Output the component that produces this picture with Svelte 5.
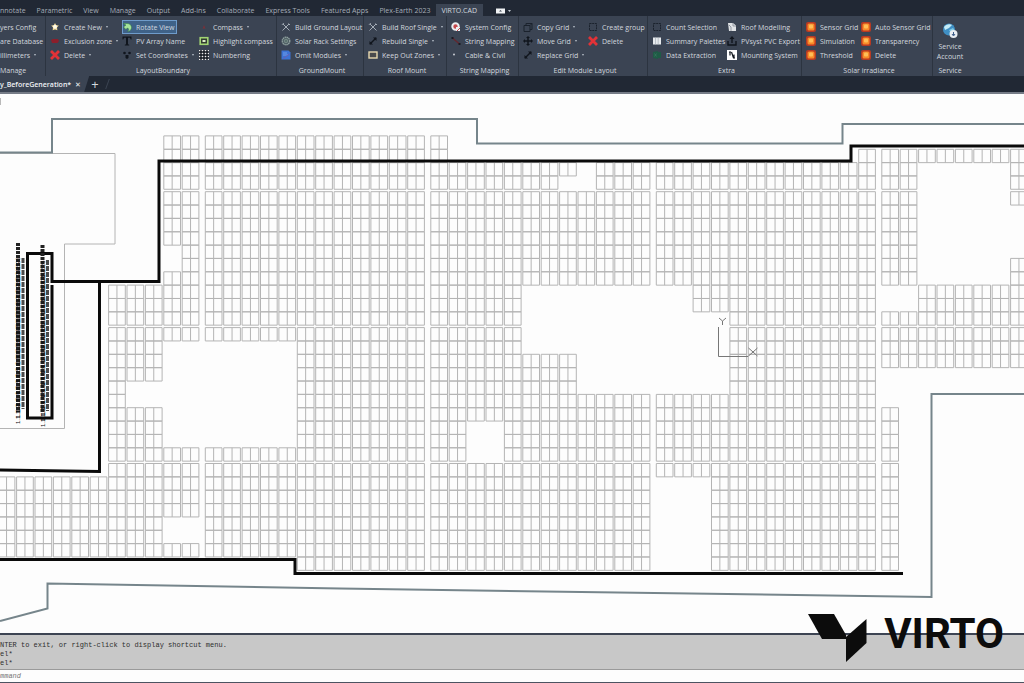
<script lang="ts">
  type Tool = { icon: string; label: string; menu?: boolean; active?: boolean };
  type Panel = { title: string; cols: string; tools: Tool[][] };

  const menuTabs = [
    'nnotate', 'Parametric', 'View', 'Manage', 'Output', 'Add-ins', 'Collaborate',
    'Express Tools', 'Featured Apps', 'Plex-Earth 2023', 'VIRTO.CAD',
  ];

  const panels: Panel[] = [
    {
      title: 'LayoutBoundary',
      cols: '72fr 77fr 77fr',
      tools: [
        [
          { icon: 'star', label: 'Create New', menu: true },
          { icon: 'zone', label: 'Exclusion zone', menu: true },
          { icon: 'cross', label: 'Delete', menu: true },
        ],
        [
          { icon: 'rotate', label: 'Rotate View', active: true },
          { icon: 'text', label: 'PV Array Name' },
          { icon: 'points', label: 'Set Coordinates', menu: true },
        ],
        [
          { icon: 'compass', label: 'Compass', menu: true },
          { icon: 'highlight', label: 'Highlight compass' },
          { icon: 'hash', label: 'Numbering' },
        ],
      ],
    },
    {
      title: 'GroundMount',
      cols: '1fr',
      tools: [[
        { icon: 'tools', label: 'Build Ground Layout' },
        { icon: 'gear', label: 'Solar Rack Settings' },
        { icon: 'omit', label: 'Omit Modules', menu: true },
      ]],
    },
    {
      title: 'Roof Mount',
      cols: '1fr',
      tools: [[
        { icon: 'tools', label: 'Build Roof Single', menu: true },
        { icon: 'resize', label: 'Rebuild Single', menu: true },
        { icon: 'keepout', label: 'Keep Out Zones', menu: true },
      ]],
    },
    {
      title: 'String Mapping',
      cols: '1fr',
      tools: [[
        { icon: 'config', label: 'System Config' },
        { icon: 'string', label: 'String Mapping' },
        { icon: 'dot', label: 'Cable & Civil' },
      ]],
    },
    {
      title: 'Edit Module Layout',
      cols: '65fr 59fr',
      tools: [
        [
          { icon: 'copy', label: 'Copy Grid', menu: true },
          { icon: 'move', label: 'Move Grid', menu: true },
          { icon: 'resize', label: 'Replace Grid', menu: true },
        ],
        [
          { icon: 'select', label: 'Create group' },
          { icon: 'cross', label: 'Delete' },
        ],
      ],
    },
    {
      title: 'Extra',
      cols: '75fr 74fr',
      tools: [
        [
          { icon: 'select', label: 'Count Selection' },
          { icon: 'palette', label: 'Summary Palettes' },
          { icon: 'extract', label: 'Data Extraction' },
        ],
        [
          { icon: 'roof', label: 'Roof Modelling' },
          { icon: 'export', label: 'PVsyst PVC Export' },
          { icon: 'mount', label: 'Mounting System' },
        ],
      ],
    },
    {
      title: 'Solar irradiance',
      cols: '55fr 71fr',
      tools: [
        [
          { icon: 'sun', label: 'Sensor Grid' },
          { icon: 'sun', label: 'Simulation' },
          { icon: 'sun', label: 'Threshold' },
        ],
        [
          { icon: 'sun', label: 'Auto Sensor Grid' },
          { icon: 'sun', label: 'Transparency' },
          { icon: 'sun', label: 'Delete' },
        ],
      ],
    },
  ];

  // Module tables: [first column, last column, [first row, last row]...]
  const tables: [number, number, [number, number][]][] = [
    [0, 6, [[25, 30]]],
    [7, 7, [[11, 30]]],
    [8, 9, [[11, 17], [20, 30]]],
    [10, 10, [[0, 7], [10, 14], [23, 27], [30, 30]]],
    [11, 11, [[0, 14], [23, 27], [30, 30]]],
    [12, 16, [[0, 14], [23, 30]]],
    [17, 24, [[0, 31]]],
    [25, 25, [[2, 31]]],
    [26, 27, [[2, 20], [24, 31]]],
    [28, 28, [[2, 31]]],
    [29, 30, [[2, 10], [16, 31]]],
    [31, 31, [[2, 2], [4, 10], [16, 31]]],
    [32, 32, [[4, 10], [19, 31]]],
    [33, 35, [[2, 10], [19, 31]]],
    [36, 37, [[2, 10], [19, 24]]],
    [38, 38, [[2, 12], [19, 24]]],
    [39, 39, [[2, 12], [19, 31]]],
    [40, 46, [[2, 31]]],
    [47, 47, [[1, 31]]],
    [48, 48, [[1, 10], [13, 16], [20, 31]]],
    [49, 49, [[1, 10], [13, 16]]],
    [50, 54, [[1, 1], [11, 16]]],
    [55, 55, [[1, 4], [9, 16]]],
  ];

  const CELL_W = 8.35;
  const CELL_H = 13.35;

  // twelve tables per block, a walkway between blocks
  function colX(c: number): number {
    return -20.2 + Math.floor(c / 12) * 225.5 + (c % 12) * 18.4;
  }

  // ten rows per section, shifted so that the first section has four
  function rowY(r: number): number {
    const n = r + 6;
    return 55.8 + Math.floor(n / 10) * 135.9 + (n % 10) * CELL_H;
  }

  function modulePath(): string {
    let d = '';
    for (const [from, to, runs] of tables) {
      for (let c = from; c <= to; c++) {
        for (const [a, b] of runs) {
          for (let r = a; r <= b; r++) {
            const x = colX(c).toFixed(1);
            const y = rowY(r).toFixed(1);
            d += `M${x} ${y}h${CELL_W * 2}v${CELL_H}h${-CELL_W * 2}zm${CELL_W} 0v${CELL_H}`;
          }
        }
      }
    }
    return d;
  }

  const modules = modulePath();

  // string labels, stacked so tightly that they overlap
  const labelRows = Array.from({ length: 26 }, (_, i) => i);

  let command = $state('');
</script>

{#snippet icon(name: string)}
  <svg class="icon" viewBox="0 0 10 10" aria-hidden="true">
    {#if name === 'star'}
      <path d="M5 1l1.200 2.200 2.600.4-1.800 2 .4 2.600L5 7.400 2.600 8.200l.4-2.600-1.800-2 2.600-.4z" fill="#f0d795" />
      <circle cx="5" cy="4.800" r="2" fill="#fffbe8" />
    {:else if name === 'zone'}
      <path d="M1 4l2-1h5l1 2-1.500 2H2z" fill="#8b1f2b" />
    {:else if name === 'cross'}
      <path d="M1 1l8 8M9 1l-8 8" stroke="#e23237" stroke-width="2.800" />
    {:else if name === 'rotate'}
      <path d="M1 1.500h4c3 0 4.500 1.800 4.500 4S8 9.300 5.500 9.500c1.500-1 1.700-3-.2-3.500L4 7.500 1.500 5 4 3z" fill="#a5e39a" stroke="#2c7a3c" stroke-width=".5" />
    {:else if name === 'text'}
      <path d="M.5 .5h9V3.500h-.8L8 1.800H6v6.400l1.200.5V9.500H2.800v-.8L4 8.200V1.800H2l-.7 1.700H.5z" fill="#10151d" />
    {:else if name === 'points'}
      <circle cx="2.500" cy="3" r="1.300" fill="#10151d" /><circle cx="7.500" cy="3" r="1.300" fill="#10151d" />
      <path d="M3.500 5h3v3l-1.500 1-1.500-1z" fill="#10151d" />
    {:else if name === 'compass'}
      <path d="M5 3l1.500 4L5 6.200 3.500 7z" fill="#7c3138" />
    {:else if name === 'highlight'}
      <rect x="1.200" y="1.700" width="7.600" height="6.600" fill="#333c32" stroke="#a2d473" stroke-width="1.600" />
      <rect x="3.500" y="4" width="3" height="2" fill="#dcecc8" />
    {:else if name === 'hash'}
      <rect width="10" height="10" fill="#f2f2f2" />
      <path d="M2 0v10M5 0v10M8 0v10M0 2h10M0 5h10M0 8h10" stroke="#10151d" stroke-width="1.400" />
    {:else if name === 'tools'}
      <path d="M2 2l6.500 6.500M8 2L1.500 8.500" stroke="#a4acb6" stroke-width="1" />
      <path d="M1 2.800L2.800 1M7.500 1.500l1.500 1.500" stroke="#a4acb6" stroke-width="1" />
    {:else if name === 'gear'}
      <circle cx="5" cy="5" r="3.800" fill="#4c5b62" stroke="#92a4a1" stroke-width="1.300" stroke-dasharray="1.500 .5" />
      <circle cx="5" cy="5" r="1.800" fill="#5c7270" stroke="#8fa39c" stroke-width=".6" />
    {:else if name === 'omit'}
      <path d="M.5 .5h7l2 2v7h-9z" fill="#3c73d6" />
      <path d="M2 3h4M2 5h5" stroke="#7fa7ee" stroke-width=".8" />
      <path d="M2 8.500L8.500 4" stroke="#6a5fb4" stroke-width="1" />
    {:else if name === 'resize'}
      <path d="M2 8l6-6" stroke="#10151d" stroke-width="1.500" />
      <path d="M5 1.500h3.500V5zM1.500 5v3.500H5z" fill="#10151d" />
    {:else if name === 'keepout'}
      <rect x="1" y="2" width="8" height="6" fill="#4a4b4c" stroke="#e9d9b0" stroke-width="1.400" />
    {:else if name === 'config'}
      <circle cx="4.500" cy="4.500" r="3.200" fill="#c5484c" stroke="#eceef0" stroke-width="2" />
      <path d="M5 5h4v4H5z" fill="#eceef0" />
      <path d="M6 9l3-3" stroke="#c5484c" stroke-width="1" />
    {:else if name === 'string'}
      <path d="M1.500 2l7 6" fill="none" stroke="#64272f" stroke-width="1.500" />
      <path d="M.5 1h2v2h-2zM7.500 7h2v2h-2z" fill="#1b1a22" />
    {:else if name === 'dot'}
      <circle cx="3" cy="4.500" r=".9" fill="#d6dae0" />
    {:else if name === 'copy'}
      <path d="M1 3.500h6v6H1zM3 3.500v-2h6v6H7M7 3.500l2-2" fill="none" stroke="#1b222d" stroke-width="1" />
    {:else if name === 'move'}
      <path d="M5 1v8M1 5h8" stroke="#10151d" stroke-width="1.500" />
      <path d="M5 0l2 2H3zM5 10l2-2H3zM0 5l2-2v4zM10 5L8 3v4z" fill="#10151d" />
    {:else if name === 'select'}
      <rect x="1.500" y="1.500" width="7" height="7" fill="none" stroke="#1b222d" stroke-width="1" stroke-dasharray="2 .7" />
    {:else if name === 'palette'}
      <rect x="1" y="1.500" width="8" height="7" fill="#e7eaed" />
      <path d="M3.500 1.500v7M6.200 1.500v7" stroke="#9ba4ae" stroke-width=".6" />
    {:else if name === 'extract'}
      <path d="M1 2l5-1v8L1 8zM6 2h3v6H6z" fill="#1f5b46" />
      <path d="M2.500 3.500l2 3M4.500 3.500l-2 3" stroke="#397a60" stroke-width=".7" />
    {:else if name === 'roof'}
      <path d="M1 1h5l3 2.500V9H2z" fill="#dfe2e5" />
      <path d="M2 3l2 2v4M6 1v3h3" fill="none" stroke="#7d8791" stroke-width=".8" />
    {:else if name === 'export'}
      <path d="M1 5v4h8V5M5 7V2" fill="none" stroke="#10151d" stroke-width="1.400" />
      <path d="M5 0l2.500 3h-5z" fill="#10151d" />
    {:else if name === 'mount'}
      <rect width="10" height="10" fill="#fff" />
      <path d="M3 1.500v4M4.500 2l2 6M7 4.500v4M2 2h2M6 8h2" stroke="#10151d" stroke-width="1.200" />
    {:else if name === 'sun'}
      <rect width="10" height="10" rx="2" fill="#b93a22" />
      <rect x="1.500" y="1.500" width="7" height="7" rx="1.500" fill="#f98a28" />
      <rect x="3" y="2.500" width="4" height="4" rx="1" fill="#ffbe57" />
    {/if}
  </svg>
{/snippet}

<div class="app">
  <header>
    <nav class="menu-tabs">
      {#each menuTabs as tab, i}
        <button class="menu-tab" class:current={i === menuTabs.length - 1}>{tab}</button>
      {/each}
      <button class="display-toggle" aria-label="Ribbon display">
        <svg viewBox="0 0 16 6" aria-hidden="true">
          <rect x="0" y="0.500" width="9" height="5" fill="#f1f3f5" />
          <path d="M3 3.500l1.500-1.500L6 3.500z" fill="#39424f" />
          <path d="M12 2h3l-1.500 2z" fill="#c3c9d1" />
        </svg>
      </button>
    </nav>

    <div class="ribbon">
      <section class="panel clipped">
        <div class="columns">
          <div class="column">
            <button class="tool">yers Config</button>
            <button class="tool">are Database</button>
            <button class="tool">illimeters <span class="arrow"></span></button>
          </div>
        </div>
        <h2>Manage</h2>
      </section>
      {#each panels as panel}
        <section class="panel">
          <div class="columns" style="grid-template-columns: {panel.cols}">
            {#each panel.tools as column}
              <div class="column">
                {#each column as tool}
                  <button class="tool" class:active={tool.active}>
                    {@render icon(tool.icon)}
                    {tool.label}
                    {#if tool.menu}<span class="arrow"></span>{/if}
                  </button>
                {/each}
              </div>
            {/each}
          </div>
          <h2>{panel.title}</h2>
        </section>
      {/each}
      <section class="panel service">
        <button class="account">
          <svg viewBox="0 0 16 16" aria-hidden="true">
            <circle cx="7" cy="6.500" r="6" fill="#3f8fc4" />
            <path d="M2 4c2-3 6-3.500 8-2L7 5 3 7z" fill="#c5ecf7" />
            <path d="M7 7l4-2 1.500 2L9 10z" fill="#83cbe6" />
            <circle cx="11.500" cy="11" r="4" fill="#e8edf2" />
            <path d="M11.500 9v3M10 11l1.500 2 1.500-2" fill="none" stroke="#3c5c88" stroke-width="1" />
          </svg>
          <span>Service</span>
          <span>Account</span>
        </button>
        <h2>Service</h2>
      </section>
    </div>

    <div class="file-tabs">
      <div class="file-tab">
        <span>y_BeforeGeneration*</span>
        <button aria-label="Close drawing">✕</button>
      </div>
      <button class="new-tab" aria-label="New drawing">+</button>
      <span class="slash"></span>
    </div>
  </header>

  <main>
    <svg class="drawing" viewBox="0 94 1024 539" role="img" aria-label="Module layout">
      <path class="modules" d={modules} />

      <path class="thin" d="M0 153.500H115V244H64.500V428.500H0" />
      <path class="border" d="M0 152.500H52V119H477V143.500H842.500V124H1024" />
      <path class="border" d="M0 621L47.500 608.500V583.500L340 588.500L931.500 597V394H1024" />

      <path class="roof" d="M52 285V418H27.500V253.500H52V281.500H159V161H851V146H1024" />
      <path class="roof" d="M99.500 281.500V471.500L0 470" />
      <path class="roof" d="M0 559.500H295V573.500H903" />

      {#each [18, 42.5] as x, side}
        <path class="strip" d="M{x} {243 + side * 2}V412" />
        <path class="strip-side" d="M{x + 5} {258 + side * 2}V{409 + side * 2}" />
        {#each labelRows as i}
          <text class="string-label" transform="translate({x + 2} {424 + side * 3 - i * 6}) rotate(-90)">1.1.{i + 1}</text>
        {/each}
      {/each}

      <path class="ucs" d="M718.500 327V356.500H748" />
      <path class="ucs" d="M719 318l3.500 3 3.500-3M722.500 321v4M748.500 348l9 8M757.500 348l-9 8" />
      <path class="ucs" d="M0 98v7" />
    </svg>
  </main>

  <footer>
    <div class="history">
      <p>NTER to exit, or right-click to display shortcut menu.</p>
      <p>el*</p>
      <p>el*</p>
    </div>
    <input class="command" bind:value={command} placeholder="mmand" aria-label="Command" />
    <div class="brand">
      <svg viewBox="0 0 60 48" aria-hidden="true">
        <path d="M0 0H26L38 21V25H14z" fill="#0c0c0c" />
        <path d="M38 23L58.500 5V29L38 48z" fill="#0c0c0c" />
      </svg>
      <span>VIRTO</span>
    </div>
  </footer>
</div>

<style>
  :global(body) {
    margin: 0;
    background: #fdfdfd;
  }

  .app {
    min-height: 100vh;
    display: flex;
    flex-direction: column;
    overflow: hidden;
    font-family: 'Open Sans', 'Noto Sans', sans-serif;
    font-size: 7px;
    color: #d3d8df;
  }

  button {
    padding: 0;
    border: 0;
    background: none;
    color: inherit;
    font: inherit;
    white-space: nowrap;
  }

  header {
    background: #212834;
    border-bottom: 2px solid #767c87;
  }

  .menu-tabs {
    display: flex;
    align-items: flex-end;
    height: 16px;
    color: #a6adb8;
  }

  .menu-tab {
    height: 12px;
    padding: 1px 6px 0 5px;
    line-height: 11px;
  }

  .menu-tab:first-child {
    padding-left: 0;
  }

  .menu-tab.current {
    background: #3b4453;
    color: #d3d8df;
  }

  .display-toggle {
    height: 10px;
    margin-left: 13px;
    line-height: 0;
  }

  .display-toggle svg {
    width: 16px;
    height: 6px;
  }

  .ribbon {
    display: grid;
    grid-template-columns: 46fr 231fr 87fr 83fr 72fr 129fr 154fr 131fr 91fr;
    height: 60px;
    background: #3b4453;
  }

  .panel {
    display: flex;
    flex-direction: column;
    justify-content: space-between;
    min-width: 0;
    padding: 4px 0 0 4px;
    border-right: 1px solid #2c3440;
    box-sizing: border-box;
  }

  .panel.clipped {
    padding-left: 0;
  }

  .panel.service {
    border-right: 0;
    padding-left: 0;
    align-items: flex-start;
  }

  .columns {
    display: grid;
  }

  .column {
    display: flex;
    flex-direction: column;
    align-items: flex-start;
    min-width: 0;
  }

  .tool {
    display: flex;
    align-items: center;
    gap: 4px;
    height: 14px;
  }

  .tool.active {
    padding-right: 3px;
    background: #3f6288;
    box-shadow: 0 0 0 1px #6f9ccb inset;
  }

  .icon {
    width: 10px;
    height: 10px;
    flex: none;
  }

  .arrow {
    border: 1px solid transparent;
    border-top: 2px solid #b9c0ca;
  }

  h2 {
    margin: 0;
    font-size: 7px;
    font-weight: 400;
    line-height: 11px;
    text-align: center;
  }

  .clipped h2 {
    text-align: left;
  }

  .service h2,
  .account {
    width: 34px;
  }

  .account {
    display: flex;
    flex-direction: column;
    align-items: center;
    line-height: 10px;
  }

  .account svg {
    width: 16px;
    height: 16px;
    margin: 3px 0;
  }

  .file-tabs {
    display: flex;
    align-items: center;
    height: 16px;
  }

  .file-tab {
    display: flex;
    align-items: center;
    gap: 4px;
    height: 16px;
    padding-right: 8px;
    background: #3b4453;
    clip-path: polygon(0 0, 100% 0, calc(100% - 5px) 100%, 0 100%);
    color: #f0f2f5;
    font-weight: 600;
  }

  .file-tab button {
    font-weight: 400;
  }

  .new-tab {
    margin-left: 2px;
    font-size: 13px;
    line-height: 16px;
  }

  .slash {
    height: 10px;
    margin-left: 8px;
    border-left: 1px solid #3b4453;
    transform: skewX(-20deg);
  }

  main {
    flex: 1;
  }

  .drawing {
    display: block;
    width: 100%;
    height: auto;
  }

  .drawing path {
    fill: none;
  }

  .drawing .modules {
    stroke: #b4b4b4;
    stroke-width: 1;
  }

  .drawing .thin {
    stroke: #b4b4b4;
  }

  .drawing .border {
    stroke: #76858b;
    stroke-width: 2;
  }

  .drawing .roof {
    stroke: #0a0a0a;
    stroke-width: 3;
  }

  .drawing .strip {
    stroke: #222;
    stroke-width: 4;
    stroke-dasharray: 3 1;
  }

  .drawing .strip-side {
    stroke: #4a4a4a;
    stroke-width: 3;
    stroke-dasharray: 5 1;
  }

  .drawing .ucs {
    stroke: #777;
  }

  .string-label {
    font-family: 'Liberation Sans', sans-serif;
    font-size: 6px;
    fill: #111;
  }

  footer {
    position: relative;
    border-top: 2px solid #3d4453;
    border-bottom: 1px solid #4c5361;
    background: #c8c8c8;
    color: #2e2e2e;
    font-family: 'Liberation Mono', monospace;
  }

  .history {
    padding: 6px 0 1px;
    border-bottom: 1px solid #9a9a9a;
  }

  .history p {
    margin: 0;
    font-size: 7px;
    line-height: 9px;
  }

  .command {
    display: block;
    width: 100%;
    height: 12px;
    padding: 0;
    border: 0;
    background: #fdfdfd;
    font: italic 7px 'Liberation Mono', monospace;
  }

  .command::placeholder {
    color: #777;
    opacity: 1;
  }

  /* watermark over the drawing and the command line */
  .brand {
    position: absolute;
    right: 20px;
    bottom: 20px;
    display: flex;
    align-items: flex-start;
    gap: 16px;
    color: #0c0c0c;
    font-family: Roboto, 'Liberation Sans', sans-serif;
    font-size: 42px;
    font-weight: 700;
    line-height: 40px;
  }

  .brand svg {
    width: 60px;
    height: 48px;
  }
</style>
